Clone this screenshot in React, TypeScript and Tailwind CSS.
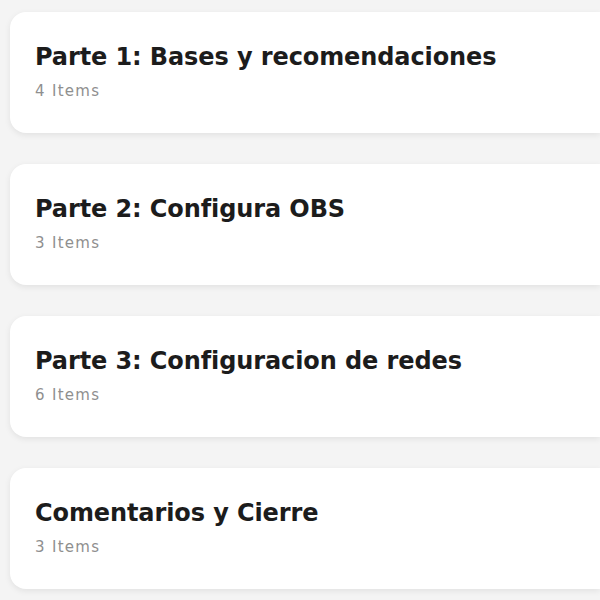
import React from "react";

type Section = {
  title: string;
  count: number;
};

const sections: Section[] = [
  { title: "Parte 1: Bases y recomendaciones", count: 4 },
  { title: "Parte 2: Configura OBS", count: 3 },
  { title: "Parte 3: Configuracion de redes", count: 6 },
  { title: "Comentarios y Cierre", count: 3 },
];

function SectionCard({ section }: { section: Section }) {
  return (
    <div className="h-[121px] rounded-l-[16px] bg-white pl-[25px] pt-[31px] shadow-[0_2px_6px_rgba(0,0,0,0.08)]">
      <div className="text-[24px] font-bold leading-[28px] tracking-[-0.1px] text-[#1c1c1c]">{section.title}</div>
      <div className="mt-[11px] text-[15px] leading-[18px] tracking-[1.3px] text-[#8f8f8f]">{section.count} Items</div>
    </div>
  );
}

export default function App() {
  return (
    <div
      className="h-[600px] w-[600px] overflow-hidden bg-[#f4f4f4] pl-[10px] pt-[12px]"
      style={{ fontFamily: "'DejaVu Sans', sans-serif" }}
    >
      <div className="flex flex-col gap-[31px]">
        {sections.map((section) => (
          <SectionCard key={section.title} section={section} />
        ))}
      </div>
    </div>
  );
}
